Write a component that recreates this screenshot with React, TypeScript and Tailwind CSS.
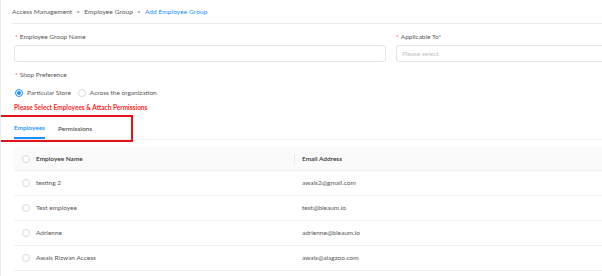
import React from 'react';

const rows = [
  { name: 'testing 2', email: 'awais2@gmail.com' },
  { name: 'Test employee', email: 'test@bleaum.io' },
  { name: 'Adrienne', email: 'adrienne@bleaum.io' },
  { name: 'Awais Rizwan Access', email: 'awais@alagzoo.com' },
];

function Circle() {
  return <span className="block w-[8px] h-[8px] rounded-full border border-[#d9d9d9] bg-white shrink-0" />;
}

export default function App() {
  return (
    <div className="relative w-[602px] h-[276px] overflow-hidden bg-white border-l border-[#ececec] font-['Lato',sans-serif] text-[6.5px] text-[#595959]">
      {/* Breadcrumb */}
      <div className="ml-[11px] h-[24px] flex items-center gap-[4px] border-b border-[#ebebeb] tracking-[0.1px]">
        <span>Access Management</span>
        <span>&gt;</span>
        <span>Employee Group</span>
        <span>&gt;</span>
        <span className="text-[#1890ff]">Add Employee Group</span>
      </div>

      {/* Form */}
      <div className="flex gap-[10px] pl-[13px] mt-[9px]">
        <div className="w-[372px] shrink-0">
          <div className="h-[8px] leading-[8px] pl-[1px]">
            <span className="text-[#ff4d4f] mr-[2px]">*</span>Employee Group Name
          </div>
          <div className="mt-[4px] h-[17px] rounded-[3px] border border-[#e3e3e3] bg-white" />
        </div>
        <div className="flex-1 min-w-[220px]">
          <div className="h-[8px] leading-[8px]">
            <span className="text-[#ff4d4f] mr-[2px]">*</span>Applicable To*
          </div>
          <div className="mt-[4px] h-[17px] rounded-l-[3px] border border-r-0 border-[#e3e3e3] flex items-center pl-[5px] text-[#bfbfbf]">
            Please select
          </div>
        </div>
      </div>

      <div className="pl-[14px] mt-[9px] h-[8px] leading-[8px]">
        <span className="text-[#ff4d4f] mr-[2px]">*</span>Shop Preference
      </div>

      <div className="pl-[14px] mt-[9px] h-[10px] flex items-center">
        <span className="w-[8px] h-[8px] rounded-full border border-[#1890ff] flex items-center justify-center">
          <span className="w-[4px] h-[4px] rounded-full bg-[#1890ff]" />
        </span>
        <span className="ml-[4px]">Particular Store</span>
        <span className="ml-[7px]"><Circle /></span>
        <span className="ml-[4px]">Across the organization</span>
      </div>

      <div className="pl-[13px] mt-[6px] h-[8px] leading-[8px] font-bold text-[#ff1f1f]">
        Please Select Employees &amp; Attach Permissions
      </div>

      {/* Tabs */}
      <div className="ml-[13px] h-[28px] flex items-end gap-[13px] border-b border-[#f0f0f0]">
        <div className="h-full flex items-center pt-[6px] text-[#1890ff] border-b-2 border-[#1890ff] font-semibold">Employees</div>
        <div className="h-full flex items-center pt-[6px] font-semibold text-[#555]">Permissions</div>
      </div>

      {/* Table */}
      <div className="ml-[13px] mt-[7px]">
        <div className="h-[24px] flex items-center bg-[#fafafa] border-b border-[#f0f0f0] font-semibold text-[#333]">
          <div className="w-[22px] flex justify-center pl-[2px]"><Circle /></div>
          <div className="w-[259px] flex items-center justify-between">
            <span>Employee Name</span>
            <span className="w-px h-[10px] bg-[#e8e8e8]" />
          </div>
          <div className="pl-[7px]">Email Address</div>
        </div>
        {rows.map((r) => (
          <div key={r.email} className="h-[25px] flex items-center border-b border-[#f0f0f0]">
            <div className="w-[22px] flex justify-center pl-[2px]"><Circle /></div>
            <div className="w-[259px]">{r.name}</div>
            <div className="pl-[7px]">{r.email}</div>
          </div>
        ))}
      </div>

      {/* Annotation */}
      <div className="absolute left-[-4px] top-[115px] w-[136px] h-[27px] border-2 border-[#e3131b]" />
    </div>
  );
}
